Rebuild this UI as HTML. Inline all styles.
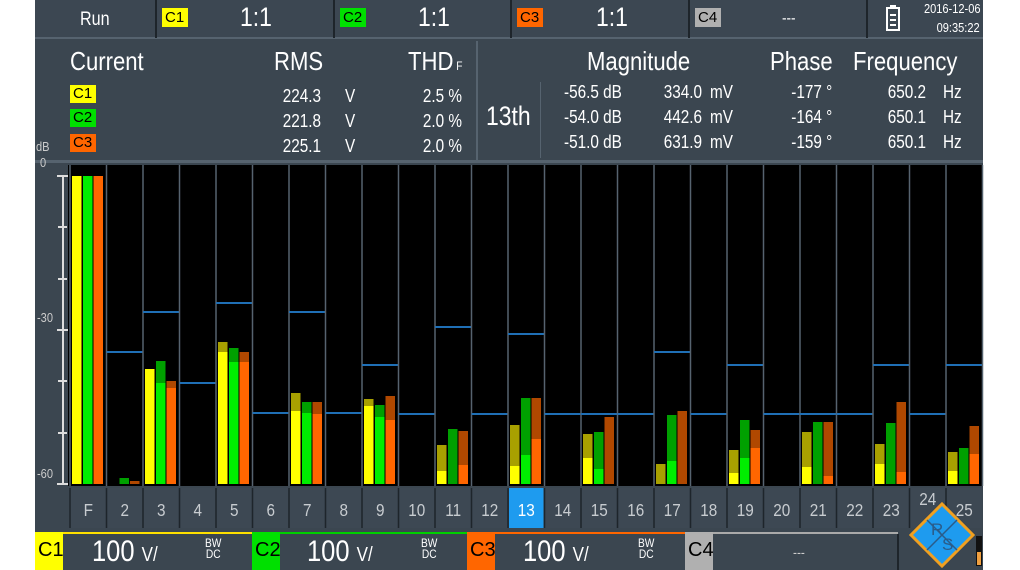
<!DOCTYPE html>
<html><head><meta charset="utf-8">
<style>
*{margin:0;padding:0;box-sizing:border-box}
body{width:1020px;height:570px;background:#fff;position:relative;overflow:hidden;font-family:"Liberation Sans",sans-serif;color:#fff}
.a{position:absolute}
.scr{left:35px;top:0;width:948px;height:570px;background:#3b4650}
.tag{position:absolute;font-size:15px;color:#000;padding:0 3px;line-height:19px;height:19px;width:26px}
.big{font-size:27px}
.t{position:absolute;white-space:nowrap;transform:scaleX(.85);transform-origin:left top}
.r{text-align:right;transform-origin:right top}
</style></head><body>
<div class="a scr"></div>
<!-- top bar -->
<div class="a" style="left:35px;top:0;width:948px;height:39px;background:#3c4752;border-bottom:2px solid #56636f"></div>
<div class="a" style="left:155px;top:0;width:2px;height:38px;background:#1e252b"></div>
<div class="a" style="left:333px;top:0;width:2px;height:38px;background:#1e252b"></div>
<div class="a" style="left:510px;top:0;width:2px;height:38px;background:#1e252b"></div>
<div class="a" style="left:688px;top:0;width:2px;height:38px;background:#1e252b"></div>
<div class="a" style="left:866px;top:0;width:2px;height:38px;background:#1e252b"></div>
<div class="t" style="left:80px;top:9px;font-size:19px">Run</div>
<div class="tag" style="left:162px;top:8px;background:#ffff00">C1</div>
<div class="t big" style="left:240px;top:2px">1:1</div>
<div class="tag" style="left:340px;top:8px;background:#00e000">C2</div>
<div class="t big" style="left:418px;top:2px">1:1</div>
<div class="tag" style="left:517px;top:8px;background:#ff6600">C3</div>
<div class="t big" style="left:596px;top:2px">1:1</div>
<div class="tag" style="left:695px;top:8px;background:#b0b0b0">C4</div>
<div class="t" style="left:782px;top:10px;font-size:16px">---</div>
<svg class="a" style="left:886px;top:5px" width="14" height="26"><rect x="4" y="0" width="6" height="3" fill="#fff"/><rect x="1" y="3" width="12" height="22" fill="none" stroke="#fff" stroke-width="2"/><rect x="4" y="9" width="6" height="2" fill="#fff"/><rect x="4" y="14" width="6" height="2" fill="#fff"/><rect x="4" y="19" width="6" height="2" fill="#fff"/></svg>
<div class="t r" style="right:40px;top:1px;font-size:13px">2016-12-06</div>
<div class="t r" style="right:40px;top:20px;font-size:13px">09:35:22</div>
<!-- info panel -->
<div class="a" style="left:476px;top:41px;width:2px;height:120px;background:#56636f"></div>
<div class="a" style="left:540px;top:82px;width:1px;height:76px;background:#56636f"></div>
<div class="a" style="left:35px;top:160px;width:948px;height:3px;background:#56636f"></div>
<div class="t" style="left:70px;top:46px;font-size:26px">Current</div>
<div class="t" style="left:274px;top:46px;font-size:26px">RMS</div>
<div class="t" style="left:408px;top:46px;font-size:26px">THD<span style="font-size:12px"> F</span></div>
<div class="tag" style="left:70px;top:85px;background:#ffff00;height:18px;line-height:18px">C1</div>
<div class="tag" style="left:70px;top:109px;background:#00e000;height:18px;line-height:18px">C2</div>
<div class="tag" style="left:70px;top:134px;background:#ff6600;height:18px;line-height:18px">C3</div>
<div class="t r" style="right:699px;top:84px;font-size:18px;line-height:25px">224.3<br>221.8<br>225.1</div>
<div class="t" style="left:345px;top:84px;font-size:18px;line-height:25px">V<br>V<br>V</div>
<div class="t r" style="right:558px;top:84px;font-size:18px;line-height:25px">2.5 %<br>2.0 %<br>2.0 %</div>
<div class="t" style="left:486px;top:101px;font-size:27px">13th</div>
<div class="t" style="left:587px;top:46px;font-size:26px">Magnitude</div>
<div class="t" style="left:770px;top:46px;font-size:26px">Phase</div>
<div class="t" style="left:853px;top:46px;font-size:26px">Frequency</div>
<div class="t" style="left:564px;top:80px;font-size:18px;line-height:25px">-56.5 dB<br>-54.0 dB<br>-51.0 dB</div>
<div class="t r" style="right:318px;top:80px;font-size:18px;line-height:25px">334.0<br>442.6<br>631.9</div>
<div class="t" style="left:710px;top:80px;font-size:18px;line-height:25px">mV<br>mV<br>mV</div>
<div class="t r" style="right:188px;top:80px;font-size:18px;line-height:25px">-177 °<br>-164 °<br>-159 °</div>
<div class="t r" style="right:94px;top:80px;font-size:18px;line-height:25px">650.2<br>650.1<br>650.1</div>
<div class="t" style="left:943px;top:80px;font-size:18px;line-height:25px">Hz<br>Hz<br>Hz</div>
<svg class="a" id="ch" style="left:0;top:0" width="1020" height="570"></svg>
<!-- axis labels -->
<div class="t" style="left:36px;top:139px;font-size:13px;color:#ccc">dB</div>
<div class="t" style="left:40px;top:155px;font-size:13px;color:#ccc">0</div>
<div class="t" style="left:37px;top:310px;font-size:13px;color:#ccc">-30</div>
<div class="t" style="left:37px;top:466px;font-size:13px;color:#ccc">-60</div>
<!-- bottom -->
<div class="a" style="left:35px;top:530px;width:948px;height:40px;background:#3b4650"></div>
<div class="a" style="left:35px;top:532px;width:28px;height:38px;background:#ffff00;color:#000;font-size:20px;padding:7px 0 0 3px">C1</div>
<div class="a" style="left:63px;top:532px;width:189px;height:2px;background:#ffe000"></div>
<div class="a" style="left:252px;top:532px;width:28px;height:38px;background:#00e000;color:#000;font-size:20px;padding:7px 0 0 3px">C2</div>
<div class="a" style="left:280px;top:532px;width:187px;height:2px;background:#00d000"></div>
<div class="a" style="left:467px;top:532px;width:28px;height:38px;background:#ff6600;color:#000;font-size:20px;padding:7px 0 0 3px">C3</div>
<div class="a" style="left:495px;top:532px;width:190px;height:2px;background:#ff6600"></div>
<div class="a" style="left:685px;top:532px;width:28px;height:38px;background:#b0b0b0;color:#000;font-size:20px;padding:7px 0 0 3px">C4</div>
<div class="a" style="left:713px;top:532px;width:185px;height:2px;background:#aaa"></div>
<div class="a" style="left:897px;top:534px;width:2px;height:36px;background:#1e252b"></div>
<div class="t" style="left:92px;top:535px;font-size:30px">100 <span style="font-size:20px">V/</span></div>
<div class="t" style="left:205px;top:538px;font-size:12px;line-height:11px;text-align:center">BW<br>DC</div>
<div class="t" style="left:307px;top:535px;font-size:30px">100 <span style="font-size:20px">V/</span></div>
<div class="t" style="left:421px;top:538px;font-size:12px;line-height:11px;text-align:center">BW<br>DC</div>
<div class="t" style="left:523px;top:535px;font-size:30px">100 <span style="font-size:20px">V/</span></div>
<div class="t" style="left:638px;top:538px;font-size:12px;line-height:11px;text-align:center">BW<br>DC</div>
<div class="t" style="left:793px;top:544px;font-size:14px;color:#ccc">---</div>
<div class="a" style="left:976px;top:536px;width:6px;height:30px;background:#111"></div>
<div class="a" style="left:977px;top:552px;width:4px;height:13px;background:#f0a040"></div>
<svg class="a" style="left:909px;top:502px" width="66" height="66"><polygon points="33,2 64,33 33,64 2,33" fill="#1e9bef" stroke="#f0a020" stroke-width="3"/><line x1="18" y1="18" x2="48" y2="48" stroke="#2a5c8a" stroke-width="1.5"/><line x1="48" y1="18" x2="18" y2="48" stroke="#2a5c8a" stroke-width="1.5"/><text x="22" y="33" font-size="17" fill="#2a5c8a" font-family="Liberation Sans">R</text><text x="33" y="48" font-size="17" fill="#2a5c8a" font-family="Liberation Sans">S</text></svg>
<script>
var s='';
var X0=70,W=36.5;
s+='<rect x="63" y="165" width="920" height="321" fill="#000"/>';
s+='<rect x="35" y="163" width="33" height="325" fill="#3b4650"/>';
s+='<path d="M63 176V484M57 176H68M57 484H68M58 227H67M58 279H67M57 330H68M58 381H67M58 433H67" stroke="#ddd" stroke-width="2" fill="none"/>';
var D={1:[176,[[176,176],[176,176],[176,176]]],2:[352,[null,[478,999],[481,999]]],3:[312,[[369,369],[361,383],[381,388]]],4:[383,null],5:[303,[[342,352],[348,362],[352,362]]],6:[413,null],7:[312,[[393,411],[402,413],[402,414]]],8:[413,null],9:[365,[[399,406],[405,417],[396,420]]],10:[414,null],11:[327,[[445,471],[429,999],[431,465]]],12:[414,null],13:[334,[[425,466],[398,455],[398,439]]],14:[414,null],15:[414,[[434,458],[432,469],[417,999]]],16:[414,null],17:[352,[[464,999],[415,461],[411,999]]],18:[414,null],19:[365,[[450,473],[420,458],[430,448]]],20:[414,null],21:[414,[[432,467],[422,999],[422,476]]],22:[414,null],23:[365,[[444,464],[423,999],[402,472]]],24:[414,null],25:[365,[[452,471],[448,999],[426,454]]]};
var br=['#ffff00','#00ee00','#ff6600'],dk=['#a8a000','#00a000','#b04800'];
var off=[2,13,23.5];
for(var i=0;i<25;i++){var x=X0+i*W,d=D[i+1];
 if(d){ if(i>0)s+='<line x1="'+x+'" y1="'+d[0]+'" x2="'+(x+W)+'" y2="'+d[0]+'" stroke="#1f6fb5" stroke-width="2"/>';
  if(d[1])for(var k=0;k<3;k++){var b=d[1][k];if(!b)continue;
   s+='<rect x="'+(x+off[k])+'" y="'+b[0]+'" width="9.5" height="'+(484-b[0])+'" fill="'+dk[k]+'"/>';
   if(b[1]<484)s+='<rect x="'+(x+off[k])+'" y="'+b[1]+'" width="9.5" height="'+(484-b[1])+'" fill="'+br[k]+'"/>';}}
 s+='<line x1="'+(x+W)+'" y1="165" x2="'+(x+W)+'" y2="486" stroke="#56636f" stroke-width="1.5"/>';
}
s+='<line x1="70" y1="165" x2="70" y2="486" stroke="#56636f" stroke-width="1.5"/>';
s+='<rect x="35" y="486" width="948" height="44" fill="#3b4650"/>';
var lab=['F'];for(i=2;i<=25;i++)lab.push(i);
for(i=0;i<25;i++){var x=X0+i*W;
 s+='<rect x="'+(x+1)+'" y="488" width="'+(W-2)+'" height="40" fill="'+(i==12?'#1e9bef':'#3d4853')+'"/>';
 s+='<line x1="'+x+'" y1="488" x2="'+x+'" y2="528" stroke="#1e252b" stroke-width="1.5"/>';
 var ty=i==23?505:516;
 s+='<text x="'+(x+W/2)+'" y="'+ty+'" text-anchor="middle" font-size="18" fill="'+(i==12?'#fff':'#c8ccd0')+'" font-family="Liberation Sans" transform="translate('+((x+W/2)*0.15)+',0) scale(0.85,1)">'+lab[i]+'</text>';}
document.getElementById('ch').innerHTML=s;
</script>
</body></html>
